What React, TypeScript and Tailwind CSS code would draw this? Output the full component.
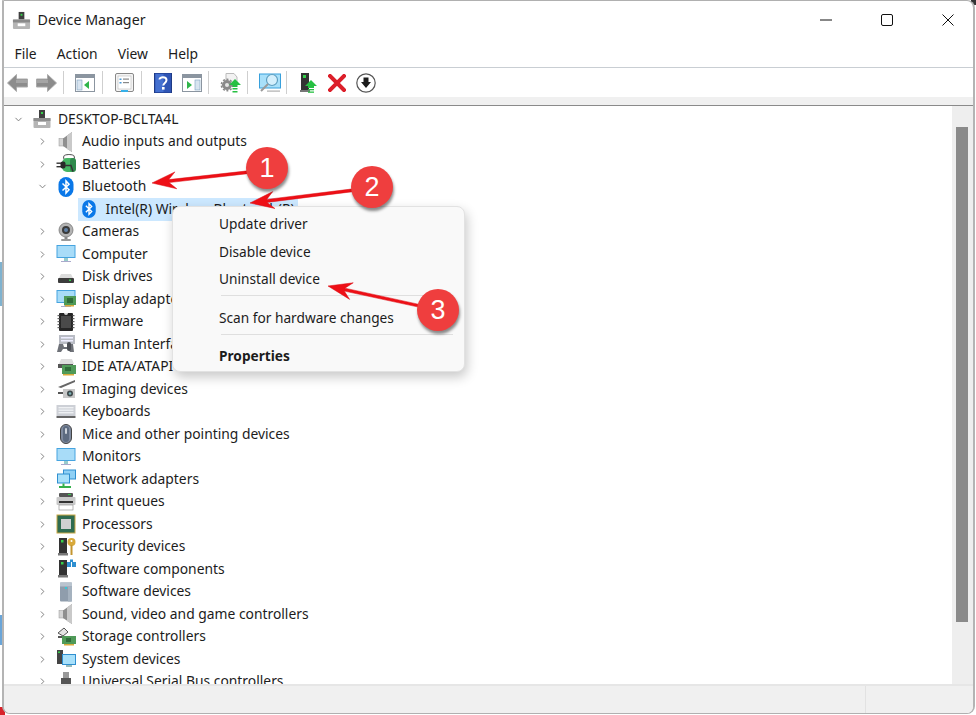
import type { ReactNode } from "react";
import { ChevronDown, ChevronRight } from "lucide-react";

const Svg = ({ children, size = 20 }: { children: ReactNode; size?: number }) => (
  <svg width={size} height={size} viewBox="0 0 20 20" className="block shrink-0">
    {children}
  </svg>
);

// tree icons, all drawn on a 20x20 box
const Computer = () => (
  <Svg>
    <rect x="7" y="1" width="6" height="8" fill="#3f3f3f" />
    <rect x="9" y="3" width="2" height="2" fill="#35d04a" />
    <rect x="1.5" y="9" width="17" height="10" rx="1" fill="#b5b5b5" />
    <rect x="1.5" y="9" width="17" height="3" fill="#8f8f8f" />
    <rect x="6" y="13" width="8" height="3" fill="#fff" />
  </Svg>
);
const Speaker = () => (
  <Svg>
    <rect x="3" y="6.5" width="5" height="7.5" fill="#d4d4d4" stroke="#999" strokeWidth="0.5" />
    <polygon points="7,6.5 16,0 16,20 7,14" fill="#8f8f8f" />
    <polygon points="11,3.5 16,0 16,20 11,17" fill="#c9c9c9" />
  </Svg>
);
const Battery = () => (
  <Svg>
    <ellipse cx="13" cy="3.5" rx="5.5" ry="3" fill="none" stroke="#666" strokeWidth="1.2" />
    <rect x="6" y="4" width="14" height="14" rx="5" fill="#45b563" />
    <rect x="14" y="4" width="6" height="14" rx="3" fill="#2e8a4c" />
    <rect x="0.5" y="8.5" width="5" height="1.4" fill="#333" />
    <rect x="0.5" y="12" width="5" height="1.4" fill="#333" />
    <rect x="4.5" y="7.5" width="5" height="7" rx="2" fill="#2a2a2a" />
    <path d="M9 11.5h6l2 6" stroke="#333" strokeWidth="1.4" fill="none" />
  </Svg>
);
const Bluetooth = () => (
  <Svg>
    <rect x="2.5" y="0" width="15" height="20" rx="7.5" fill="#0a78e8" />
    <path
      d="M6.5 6.5 13 12.8 10 16V4l3 3.2-6.5 6.3"
      stroke="#fff"
      strokeWidth="1.5"
      fill="none"
    />
  </Svg>
);
const Webcam = () => (
  <Svg>
    <circle cx="10" cy="8" r="7" fill="#b3b3b3" stroke="#777" strokeWidth="0.8" />
    <circle cx="10" cy="8" r="4" fill="#3a3a3a" />
    <circle cx="10" cy="8" r="2" fill="#5f7fa5" />
    <rect x="8.5" y="15" width="3" height="2" fill="#888" />
    <rect x="5" y="17" width="10" height="2" rx="1" fill="#999" />
  </Svg>
);
const Monitor = ({ card }: { card?: boolean }) => (
  <Svg>
    <rect x="0.5" y="1" width="19" height="13" fill="#46a4e0" />
    <rect x="1.5" y="2" width="17" height="11" fill="#a8dcf8" />
    <rect x="8" y="14" width="4" height="3" fill="#9cc" />
    <rect x="5" y="17" width="10" height="1" fill="#aac" />
    {card && (
      <>
        <rect x="8" y="7" width="12" height="9" fill="#4f9a58" />
        <rect x="11" y="9" width="6" height="5" fill="#2f6d3a" />
        <rect x="9" y="16" width="9" height="1.5" fill="#d8a93a" />
      </>
    )}
  </Svg>
);
const Disk = () => (
  <Svg>
    <path d="M3 11 5 7h10l2 4z" fill="#dcdcdc" />
    <rect x="2" y="11" width="16" height="5" rx="1" fill="#3c3c3c" />
    <rect x="13" y="12.5" width="2" height="1.5" fill="#35d04a" />
  </Svg>
);
const Firmware = () => (
  <Svg>
    <rect x="3" y="1" width="14" height="18" rx="1" fill="#262626" />
    <path d="M8 1a2 2 0 0 0 4 0z" fill="#ddd" />
    <rect x="5" y="4" width="10" height="12" fill="#4a4a4a" />
    {[3, 6, 9, 12, 15].map((y) => (
      <g key={y}>
        <rect x="1.5" y={y} width="2" height="1.2" fill="#666" />
        <rect x="16.5" y={y} width="2" height="1.2" fill="#666" />
      </g>
    ))}
  </Svg>
);
const Hid = () => (
  <Svg>
    <rect x="3" y="1" width="16" height="9" fill="#b9bcc4" />
    <rect x="5" y="3" width="12" height="1.5" fill="#eef" />
    <rect x="5" y="6" width="12" height="1.5" fill="#eef" />
    <path d="M1 18 3 10h4l1 3h3l1-3h5l1 8h-4l-2-3H7l-2 3z" fill="#6e7178" />
    <rect x="11" y="8" width="4" height="9" rx="2" fill="#4b4e55" />
  </Svg>
);
const Ide = () => (
  <Svg>
    <path d="M3 7 5 2h11l2 5z" fill="#ddd" />
    <rect x="2" y="7" width="15" height="4" fill="#555" />
    <rect x="6" y="8" width="14" height="9" fill="#4f9a58" />
    <rect x="9" y="10" width="6" height="4" fill="#2f6d3a" />
    <rect x="7" y="17" width="11" height="1.5" fill="#d8a93a" />
  </Svg>
);
const Imaging = () => (
  <Svg>
    <path d="M2 8 19 1v2L5 9z" fill="#666" />
    <rect x="2" y="13" width="8" height="2" fill="#555" />
    <rect x="7" y="10" width="12" height="9" fill="#c8c8c8" />
    <circle cx="14" cy="14.5" r="3" fill="#3f4a4c" />
    <circle cx="14" cy="14.5" r="1.3" fill="#7fb3b8" />
  </Svg>
);
const Keyboard = () => (
  <Svg>
    <rect x="0.5" y="3" width="19" height="11" fill="#cdd0d6" />
    {[5, 7.5, 10].map((y) => (
      <rect key={y} x="2.5" y={y} width="15" height="1.4" fill="#eef0f3" />
    ))}
    <rect x="0.5" y="14" width="19" height="2" fill="#666" />
  </Svg>
);
const Mouse = () => (
  <Svg>
    <rect x="4.5" y="0.5" width="11" height="19" rx="5.5" fill="#7f8ba0" stroke="#444" />
    <rect x="7" y="2" width="6" height="16" rx="3" fill="#5d6b80" />
    <rect x="9" y="4" width="2" height="6" rx="1" fill="#cdd3db" />
  </Svg>
);
const Network = () => (
  <Svg>
    <rect x="7" y="0.5" width="13" height="10" fill="#2f8fd0" />
    <rect x="8" y="1.5" width="11" height="8" fill="#8fd0f5" />
    <rect x="1" y="4.5" width="13" height="10" fill="#2f8fd0" />
    <rect x="2" y="5.5" width="11" height="8" fill="#a8e0fa" />
    <rect x="6.5" y="14.5" width="2" height="3" fill="#35b04a" />
    <rect x="3" y="17" width="12" height="2" fill="#35b04a" />
  </Svg>
);
const Printer = () => (
  <Svg>
    <rect x="3" y="1" width="14" height="4" rx="1" fill="#555" />
    <rect x="12" y="2" width="3" height="1" fill="#35d04a" />
    <rect x="0.5" y="5" width="19" height="8" rx="1" fill="#c9c9c9" />
    <rect x="3" y="9" width="14" height="2" fill="#333" />
    <rect x="3" y="13" width="14" height="5" fill="#fff" stroke="#888" strokeWidth="0.6" />
  </Svg>
);
const Processor = () => (
  <Svg>
    <rect x="0.5" y="0.5" width="19" height="19" fill="#c9a845" />
    <rect x="1.5" y="1.5" width="17" height="17" fill="#2f6b50" />
    <rect x="5" y="5" width="10" height="10" fill="#d0d0d0" />
  </Svg>
);
const Tower = () => (
  <>
    <rect x="3" y="1" width="8" height="15" fill="#333" />
    <rect x="5" y="3" width="2.5" height="2.5" fill="#35d04a" />
    <rect x="2" y="16" width="10" height="2.5" fill="#777" />
  </>
);
const Security = () => (
  <Svg>
    <Tower />
    <circle cx="15.5" cy="5" r="4" fill="#d8a93a" />
    <rect x="14.5" y="8" width="2" height="10" fill="#c39530" />
    <circle cx="15.5" cy="4" r="1" fill="#fff" />
  </Svg>
);
const Components = () => (
  <Svg>
    <Tower />
    <rect x="11" y="3" width="9" height="5" fill="#2f8fd0" />
    <rect x="14" y="0.5" width="3" height="3" fill="#2f8fd0" />
    <rect x="15" y="3" width="1" height="5" fill="#fff" />
  </Svg>
);
const SoftwareDevice = () => (
  <Svg>
    <rect x="4" y="0.5" width="12" height="19" rx="1" fill="#8f9dac" />
    <rect x="4" y="0.5" width="12" height="4" fill="#b9c4cf" />
    <rect x="9" y="5" width="2" height="2" fill="#35c8d8" />
    <rect x="12" y="5" width="4" height="14.5" fill="#a5b2bf" />
  </Svg>
);
const Storage = () => (
  <Svg>
    <path d="M2 6 8 1l4 4-5 4z" fill="#e5e5e5" stroke="#555" />
    <rect x="2" y="9" width="6" height="2" fill="#555" />
    <rect x="6" y="9" width="14" height="8" fill="#4f9a58" />
    <rect x="10" y="11" width="5" height="4" fill="#2f6d3a" />
    <rect x="8" y="17" width="10" height="1.5" fill="#d8a93a" />
  </Svg>
);
const SystemDevice = () => (
  <Svg>
    <rect x="1" y="1" width="6" height="14" fill="#444" />
    <rect x="2" y="2.5" width="2" height="1.5" fill="#35d04a" />
    <rect x="6" y="5" width="14" height="11" fill="#2f8fd0" />
    <rect x="7" y="6" width="12" height="9" fill="#a8e0fa" />
    <rect x="10" y="16" width="6" height="2" fill="#9bb" />
  </Svg>
);
const Usb = () => (
  <Svg>
    <rect x="7" y="0" width="6" height="6" fill="#999" />
    <rect x="5" y="6" width="10" height="14" fill="#555" />
  </Svg>
);

type Node = { label: string; icon: ReactNode; open?: boolean };

const topNodes: Node[] = [
  { label: "Audio inputs and outputs", icon: <Speaker /> },
  { label: "Batteries", icon: <Battery /> },
  { label: "Bluetooth", icon: <Bluetooth />, open: true },
];

const restNodes: Node[] = [
  { label: "Cameras", icon: <Webcam /> },
  { label: "Computer", icon: <Monitor /> },
  { label: "Disk drives", icon: <Disk /> },
  { label: "Display adapters", icon: <Monitor card /> },
  { label: "Firmware", icon: <Firmware /> },
  { label: "Human Interface Devices", icon: <Hid /> },
  { label: "IDE ATA/ATAPI controllers", icon: <Ide /> },
  { label: "Imaging devices", icon: <Imaging /> },
  { label: "Keyboards", icon: <Keyboard /> },
  { label: "Mice and other pointing devices", icon: <Mouse /> },
  { label: "Monitors", icon: <Monitor /> },
  { label: "Network adapters", icon: <Network /> },
  { label: "Print queues", icon: <Printer /> },
  { label: "Processors", icon: <Processor /> },
  { label: "Security devices", icon: <Security /> },
  { label: "Software components", icon: <Components /> },
  { label: "Software devices", icon: <SoftwareDevice /> },
  { label: "Sound, video and game controllers", icon: <Speaker /> },
  { label: "Storage controllers", icon: <Storage /> },
  { label: "System devices", icon: <SystemDevice /> },
  { label: "Universal Serial Bus controllers", icon: <Usb /> },
];

function TreeRow({ node }: { node: Node }) {
  return (
    <div className="flex h-[22.5px] items-center pl-[27.5px]">
      <span className="flex w-[20px] shrink-0 justify-center text-[#777]">
        {node.open ? <ChevronDown size={11} /> : <ChevronRight size={11} />}
      </span>
      <span className="ml-[4px] w-[21px] shrink-0">{node.icon}</span>
      <span className="ml-[5px] whitespace-nowrap">{node.label}</span>
    </div>
  );
}

// toolbar drawings
const ArrowBtn = ({ flip }: { flip?: boolean }) => (
  <svg width="21" height="20" viewBox="0 0 21 20" className={flip ? "-scale-x-100" : ""}>
    <path d="M0.5 10 9.5 1.5V6H20.5V14H9.5V18.5z" fill="#8c8c8c" stroke="#aaa" />
    <rect x="9" y="7" width="11" height="3" fill="#a5a5a5" />
  </svg>
);
const PaneIcon = ({ right }: { right?: boolean }) => (
  <svg width="20" height="18" viewBox="0 0 20 18">
    <rect x="0.5" y="0.5" width="19" height="17" fill="#fff" stroke="#8b95a0" />
    <rect x="1" y="1" width="18" height="3" fill="#8b95a0" />
    <rect x={right ? 13 : 2} y="6" width="5" height="10" fill="#d8e4f0" stroke="#7ea0c0" strokeWidth="0.6" />
    <polygon points={right ? "5,7 5,15 10,11" : "14,7 14,15 9,11"} fill="#2fb54a" />
  </svg>
);
const PropsIcon = () => (
  <svg width="19" height="20" viewBox="0 0 19 20">
    <rect x="0.5" y="0.5" width="18" height="18" rx="1.5" fill="#f4f4f4" stroke="#888" />
    <rect x="3" y="3" width="13" height="13" fill="#fff" stroke="#bbb" strokeWidth="0.6" />
    <rect x="4.5" y="5.5" width="2" height="1.5" fill="#4a9ad8" />
    <rect x="8" y="5.5" width="6" height="1.2" fill="#888" />
    <rect x="4.5" y="9" width="2" height="1.5" fill="#4a9ad8" />
    <rect x="8" y="9" width="6" height="1.2" fill="#888" />
    <rect x="6" y="17" width="7" height="2" fill="#37b0e8" />
  </svg>
);
const HelpIcon = () => (
  <svg width="18" height="20" viewBox="0 0 18 20">
    <rect x="0.5" y="0" width="17" height="20" fill="#2f55b5" stroke="#1e3a85" />
    <rect x="1.5" y="1" width="8" height="18" fill="#4470d0" />
    <path
      d="M5.5 6.5C5.5 3.5 12.5 3.5 12.5 7c0 3-3.2 2.8-3.2 5.5"
      stroke="#fff"
      strokeWidth="2"
      fill="none"
    />
    <rect x="8" y="14" width="2.6" height="2.6" fill="#fff" />
  </svg>
);
const ScanIcon = () => (
  <svg width="21" height="20" viewBox="0 0 21 20">
    <path d="M6 0.5H14L17 4V11H6z" fill="#f2f2f2" stroke="#bbb" />
    <circle cx="7" cy="12" r="4.5" fill="#8a8a8a" stroke="#8a8a8a" />
    <circle cx="7" cy="12" r="5.6" fill="none" stroke="#8a8a8a" strokeWidth="1.6" strokeDasharray="2 1.6" />
    <circle cx="7" cy="12" r="2" fill="#e5e5e5" />
    <polygon points="15,6 21,12 17.5,12 17.5,14 12.5,14 12.5,12 9,12" fill="#27c043" />
    <rect x="12.5" y="15" width="5" height="1.5" fill="#27c043" />
    <rect x="12.5" y="18" width="5" height="1.5" fill="#27c043" />
  </svg>
);
const DisplayScanIcon = () => (
  <svg width="22" height="20" viewBox="0 0 22 20">
    <rect x="0.5" y="1" width="21" height="14" fill="#a8e0fa" stroke="#38a0dc" />
    <circle cx="13" cy="7" r="5.5" fill="#d4effc" stroke="#5f9fc0" strokeWidth="1.2" />
    <path d="M9 11 2 18" stroke="#9a9a9a" strokeWidth="2" />
    <rect x="8" y="17.5" width="13" height="1.2" fill="#b0b0b0" />
  </svg>
);
const UpdateDriverIcon = () => (
  <svg width="17" height="20" viewBox="0 0 17 20">
    <rect x="1" y="0" width="8" height="17" fill="#333" />
    <rect x="3" y="2" width="3" height="3" fill="#35d04a" />
    <rect x="0" y="17" width="10" height="2" fill="#777" />
    <polygon points="11,7 17,13 14,13 14,15 8,15 8,13 5,13" fill="#27c043" />
    <rect x="8" y="16" width="6" height="1.3" fill="#27c043" />
    <rect x="8" y="18.5" width="6" height="1.3" fill="#27c043" />
  </svg>
);
const RemoveIcon = () => (
  <svg width="18" height="18" viewBox="0 0 18 18">
    <path d="M2 2 16 16M16 2 2 16" stroke="#dc1f2a" strokeWidth="4" strokeLinecap="square" />
  </svg>
);
const DownCircleIcon = () => (
  <svg width="20" height="20" viewBox="0 0 20 20">
    <circle cx="10" cy="10" r="9.2" fill="#fff" stroke="#555" strokeWidth="1.2" />
    <path d="M7.5 4.5h5V9h2.5L10 15 5 9h2.5z" fill="#1c1c1c" />
  </svg>
);

const Tool = ({ children }: { children: ReactNode }) => (
  <span className="flex h-[28px] w-[28.5px] shrink-0 items-center justify-center">{children}</span>
);
const Sep = () => (
  <span className="flex h-[28px] w-[10.5px] shrink-0 items-center pl-[2px]">
    <span className="h-[23px] w-px bg-[#cfcfcf]" />
  </span>
);

const MenuItem = ({ children, bold }: { children: ReactNode; bold?: boolean }) => (
  <div className={`flex h-[27.5px] items-center pl-[46px] ${bold ? "font-bold" : ""}`}>{children}</div>
);

const Badge = ({ n, x, y }: { n: number; x: number; y: number }) => (
  <div
    style={{ left: x - 21, top: y - 21 }}
    className="absolute flex h-[42px] w-[42px] items-center justify-center rounded-full bg-[#ef3e3e] font-['Liberation_Sans',sans-serif] text-[27px] text-white shadow-[1px_3px_3px_rgba(0,0,0,0.45)]"
  >
    {n}
  </div>
);

// arrow from the badge tail down to the tip, with a swept back head
function Arrow({ tail, tip }: { tail: [number, number]; tip: [number, number] }) {
  const dx = tip[0] - tail[0];
  const dy = tip[1] - tail[1];
  const len = Math.hypot(dx, dy);
  const ux = dx / len;
  const uy = dy / len;
  const at = (back: number, side: number) =>
    `${tip[0] - ux * back - uy * side},${tip[1] - uy * back + ux * side}`;
  const points = [
    at(0, 0),
    at(24, 8.5),
    at(17, 1.5),
    at(len, 1.4),
    at(len, -1.4),
    at(17, -1.5),
    at(24, -8.5),
  ].join(" ");
  return <polygon points={points} fill="#ee0f16" stroke="#d80c12" strokeWidth="0.5" />;
}

export default function App() {
  return (
    <div className="relative h-[715px] w-[976px] overflow-hidden bg-white font-['Noto_Sans',sans-serif] text-[13.85px] text-[#1c1c1c]">
      {/* bits of desktop showing at the left edge */}
      <div className="absolute left-0 top-[262px] h-[44px] w-[2px] bg-[#7fb2cf]" />
      <div className="absolute left-0 top-[615px] h-[30px] w-[2px] bg-[#6aa5d8]" />
      <div className="absolute bottom-0 left-0 h-[8px] w-[5px] bg-[#d8222a]" />
      <div className="absolute right-0 top-0 h-[5px] w-[5px] bg-[#333]" />

      <div className="absolute inset-x-[1.5px] bottom-[1px] top-0 flex flex-col overflow-hidden rounded-b-[8px] rounded-tr-[8px] border-x-[2px] border-y-[1.5px] border-x-[#b4b4b4] border-y-[#b0b0b0] bg-white">
        <div className="flex h-[39px] shrink-0 items-center pl-[8px] pb-[1px]">
          <Svg size={19}>
            <rect x="7" y="1" width="6" height="8" fill="#3f3f3f" />
            <rect x="9" y="3" width="2" height="2" fill="#35d04a" />
            <rect x="1" y="9" width="18" height="10" rx="1" fill="#b5b5b5" />
            <rect x="1" y="9" width="18" height="3" fill="#8a8a8a" />
            <rect x="6" y="13" width="8" height="3" fill="#fff" />
          </Svg>
          <span className="ml-[7px] text-[14.25px]">Device Manager</span>
          {/* window controls */}
          <span className="ml-auto mr-[18px] flex items-center gap-[47px]">
            <svg width="14" height="14" viewBox="0 0 14 14">
              <path d="M1 7H13" stroke="#111" strokeWidth="1" />
            </svg>
            <svg width="14" height="14" viewBox="0 0 14 14">
              <rect x="1.5" y="1.5" width="11" height="11" rx="1.5" fill="none" stroke="#111" />
            </svg>
            <svg width="14" height="14" viewBox="0 0 14 14">
              <path d="M1.5 1.5 12.5 12.5M12.5 1.5 1.5 12.5" stroke="#111" strokeWidth="1" />
            </svg>
          </span>
        </div>

        <div className="flex h-[28px] shrink-0 items-center gap-[20px] border-b-[1.5px] border-[#c9ced3] pl-[11px] pt-[2px]">
          <span>File</span>
          <span>Action</span>
          <span>View</span>
          <span>Help</span>
        </div>

        <div className="flex h-[29px] shrink-0 items-center">
          <Tool><ArrowBtn /></Tool>
          <Tool><ArrowBtn flip /></Tool>
          <Sep />
          <Tool><PaneIcon /></Tool>
          <Sep />
          <Tool><PropsIcon /></Tool>
          <Sep />
          <Tool><HelpIcon /></Tool>
          <Tool><PaneIcon right /></Tool>
          <Sep />
          <Tool><ScanIcon /></Tool>
          <Sep />
          <Tool><DisplayScanIcon /></Tool>
          <Sep />
          <Tool><UpdateDriverIcon /></Tool>
          <Tool><RemoveIcon /></Tool>
          <Tool><DownCircleIcon /></Tool>
        </div>
        <div className="h-[8px] shrink-0 bg-[#f0f0f0]" />

        <div className="flex min-h-0 flex-1 border-t-[1.5px] border-[#8a8a8a]">
          <div className="min-w-0 flex-1 overflow-hidden pl-[1px] pt-[2px]">
            <div className="flex h-[22.5px] items-center pl-[3.5px]">
              <span className="flex w-[20px] shrink-0 justify-center text-[#777]">
                <ChevronDown size={11} />
              </span>
              <span className="ml-[3.5px] w-[21px] shrink-0"><Computer /></span>
              <span className="ml-[5.5px] whitespace-nowrap">DESKTOP-BCLTA4L</span>
            </div>
            {topNodes.map((n) => (
              <TreeRow key={n.label} node={n} />
            ))}
            <div className="ml-[73px] flex h-[22.5px] w-[220px] items-center bg-[#cce8ff] pl-[2px]">
              <span className="w-[18px] shrink-0"><Svg size={18}>
                <rect x="2.5" y="0" width="15" height="20" rx="7.5" fill="#0a78e8" />
                <path d="M6.5 6.5 13 12.8 10 16V4l3 3.2-6.5 6.3" stroke="#fff" strokeWidth="1.5" fill="none" />
              </Svg></span>
              <span className="ml-[8px] whitespace-nowrap">Intel(R) Wireless Bluetooth(R)</span>
            </div>
            {restNodes.map((n) => (
              <TreeRow key={n.label} node={n} />
            ))}
          </div>
          <div className="flex w-[21px] shrink-0 flex-col bg-[#eeeeee] pb-[62px] pl-[4px] pr-[5px] pt-[21px]">
            <div className="flex-1 bg-[#8a8a8a]" />
          </div>
        </div>

        <div className="flex h-[29px] shrink-0 border-t-[2px] border-[#e6e6e6] bg-[#f0f0f0]">
          <div className="flex-1 border-r-[1.5px] border-[#e2e2e2]" />
          <div className="w-[107px]" />
        </div>
      </div>

      {/* context menu */}
      <div className="absolute left-[172px] top-[206px] h-[166px] w-[293px] overflow-hidden rounded-[8px] border border-[#e2e2e2] bg-[#f9f9f9] pt-[4px] text-[13.7px] shadow-[2px_5px_12px_rgba(0,0,0,0.22)]">
        <MenuItem>Update driver</MenuItem>
        <MenuItem>Disable device</MenuItem>
        <MenuItem>Uninstall device</MenuItem>
        <div className="mb-[9px] ml-[48px] mr-[11px] mt-[1px] h-px bg-[#dfdfdf]" />
        <MenuItem>Scan for hardware changes</MenuItem>
        <div className="mb-[8px] ml-[48px] mr-[11px] mt-[2px] h-px bg-[#dfdfdf]" />
        <MenuItem bold>Properties</MenuItem>
        <div className="ml-[41px] mr-[8px] h-[4px] bg-[#f0f0f0]" />
      </div>

      {/* annotations */}
      <svg width="976" height="715" className="pointer-events-none absolute left-0 top-0">
        <Arrow tail={[250, 172]} tip={[152, 183]} />
        <Arrow tail={[355, 190]} tip={[250, 203]} />
        <Arrow tail={[420, 306]} tip={[328, 286]} />
      </svg>
      <Badge n={1} x={267} y={168} />
      <Badge n={2} x={372} y={187} />
      <Badge n={3} x={438} y={310} />
    </div>
  );
}
